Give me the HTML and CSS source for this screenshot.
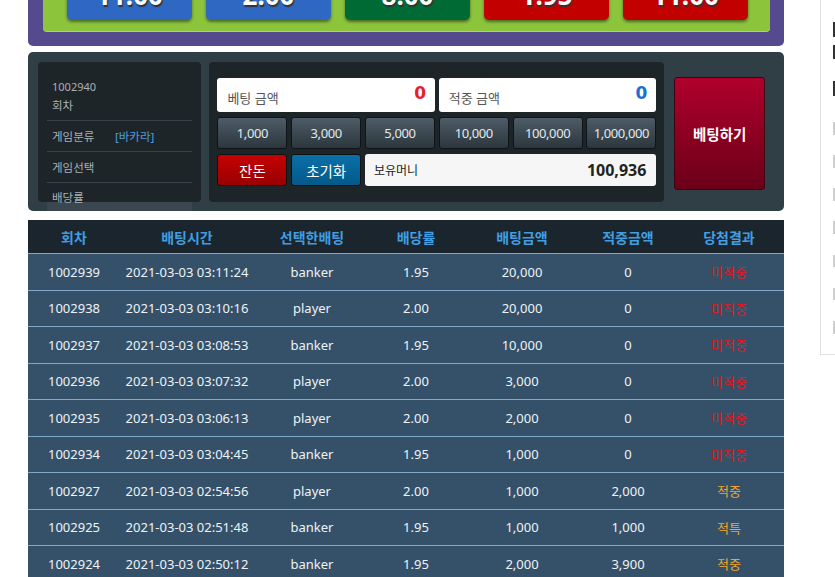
FILE: index.html
```html
<!DOCTYPE html>
<html lang="ko">
<head>
  <meta charset="UTF-8">
  <meta name="viewport" content="width=device-width, initial-scale=1.0">
  <title>바카라 베팅</title>
  <link rel="stylesheet" href="styles.css">
</head>
<body>
  <div class="page">
    <div class="game">
      <div class="odds-panel">
        <div class="odds-board">
          <button class="odd blue">11.00</button>
          <button class="odd blue">2.00</button>
          <button class="odd green">8.00</button>
          <button class="odd red">1.95</button>
          <button class="odd red">11.00</button>
        </div>
      </div>

      <div class="bet-panel">
        <div class="info-box">
          <ul class="info-list">
            <li><span class="round-no">1002940</span><span>회차</span></li>
            <li><span class="info-label">게임분류</span><span class="info-value">[바카라]</span></li>
            <li><span class="info-label">게임선택</span></li>
            <li class="last"><span class="info-label">배당률</span></li>
          </ul>
        </div>

        <div class="bet-box">
          <div class="amount-field span3">
            <span>베팅 금액</span><b class="red-val">0</b>
          </div>
          <div class="amount-field span3">
            <span>적중 금액</span><b class="blue-val">0</b>
          </div>
          <button class="chip">1,000</button>
          <button class="chip">3,000</button>
          <button class="chip">5,000</button>
          <button class="chip">10,000</button>
          <button class="chip">100,000</button>
          <button class="chip">1,000,000</button>
          <button class="action change">잔돈</button>
          <button class="action reset">초기화</button>
          <div class="money-field span4">
            <span>보유머니</span><b>100,936</b>
          </div>
        </div>

        <button class="bet-btn">베팅하기</button>
      </div>

      <table class="history">
        <thead>
          <tr>
            <th class="c1">회차</th>
            <th class="c2">배팅시간</th>
            <th class="c3">선택한배팅</th>
            <th class="c4">배당률</th>
            <th class="c5">배팅금액</th>
            <th class="c6">적중금액</th>
            <th class="c7">당첨결과</th>
          </tr>
        </thead>
        <tbody>
          <tr><td>1002939</td><td>2021-03-03 03:11:24</td><td>banker</td><td>1.95</td><td>20,000</td><td>0</td><td class="lose">미적중</td></tr>
          <tr><td>1002938</td><td>2021-03-03 03:10:16</td><td>player</td><td>2.00</td><td>20,000</td><td>0</td><td class="lose">미적중</td></tr>
          <tr><td>1002937</td><td>2021-03-03 03:08:53</td><td>banker</td><td>1.95</td><td>10,000</td><td>0</td><td class="lose">미적중</td></tr>
          <tr><td>1002936</td><td>2021-03-03 03:07:32</td><td>player</td><td>2.00</td><td>3,000</td><td>0</td><td class="lose">미적중</td></tr>
          <tr><td>1002935</td><td>2021-03-03 03:06:13</td><td>player</td><td>2.00</td><td>2,000</td><td>0</td><td class="lose">미적중</td></tr>
          <tr><td>1002934</td><td>2021-03-03 03:04:45</td><td>banker</td><td>1.95</td><td>1,000</td><td>0</td><td class="lose">미적중</td></tr>
          <tr><td>1002927</td><td>2021-03-03 02:54:56</td><td>player</td><td>2.00</td><td>1,000</td><td>2,000</td><td class="win">적중</td></tr>
          <tr><td>1002925</td><td>2021-03-03 02:51:48</td><td>banker</td><td>1.95</td><td>1,000</td><td>1,000</td><td class="win">적특</td></tr>
          <tr><td>1002924</td><td>2021-03-03 02:50:12</td><td>banker</td><td>1.95</td><td>2,000</td><td>3,900</td><td class="win">적중</td></tr>
        </tbody>
      </table>
    </div>

    <div class="side">
      <span class="mark dark m1"></span>
      <span class="mark dark m2"></span>
      <span class="mark dark m3"></span>
      <span class="mark light"></span>
      <span class="mark light"></span>
      <span class="mark light"></span>
      <span class="mark light"></span>
      <span class="mark light"></span>
      <span class="mark light"></span>
      <span class="mark light"></span>
    </div>
  </div>
</body>
</html>
```

FILE: styles.css
```css
html, body {
  margin: 0;
  padding: 0;
  background: #fff;
  overflow: hidden;
}
body {
  font-family: "Noto Sans", "Noto Sans CJK KR", sans-serif;
  font-size: 13px;
  color: #333;
}
button {
  font-family: inherit;
  cursor: pointer;
  padding: 0;
}
.page {
  display: flex;
  align-items: flex-start;
  width: 1100px;
}
.game {
  width: 756px;
  margin-left: 28px;
}

/* odds board */
.odds-panel {
  margin-top: -30px;
  background: #564a8f;
  border-radius: 0 0 5px 5px;
  padding: 0 14px 15px 15px;
}
.odds-board {
  background: #8cc43c;
  border-radius: 0 0 4px 4px;
  padding: 0 20px 11px 24px;
  display: flex;
  gap: 14px;
  box-shadow: 0 1px 0 #a8dc58;
}
.odd {
  width: 125px;
  height: 50px;
  border: none;
  border-radius: 0 0 5px 5px;
  color: #fff;
  font-size: 26px;
  font-weight: bold;
  line-height: 50px;
  text-shadow: 1px 2px 1px #333;
  box-shadow: 0 2px 3px rgba(0, 0, 0, 0.45);
}
.odd.blue { background: #2f68c2; }
.odd.green { background: #006a35; }
.odd.red { background: #c30000; }

/* bet panel */
.bet-panel {
  margin-top: 6px;
  height: 159px;
  background: #303e46;
  border-radius: 5px;
  padding: 10px 19px 0 10px;
  box-sizing: border-box;
  display: flex;
  align-items: flex-start;
}
.info-box {
  width: 164px;
  height: 140px;
  background: #1e2529;
  border-radius: 4px;
  padding: 10px 9px 0 9px;
  box-sizing: border-box;
}
.info-list {
  list-style: none;
  margin: 0;
  padding: 0;
  color: #a9b1b6;
  font-size: 11.5px;
}
.info-list li {
  height: 30px;
  display: flex;
  align-items: center;
  padding-left: 5px;
  border-bottom: 1px solid #36434b;
}
.info-list li:first-child {
  height: 48px;
  flex-direction: column;
  align-items: flex-start;
  justify-content: center;
  gap: 3px;
}
.info-list li.last {
  height: 28px;
  align-items: flex-start;
  padding-top: 6px;
  box-sizing: border-box;
  border-bottom: none;
  background: linear-gradient(#1e2529 0, #1e2529 19px, #3a4750 19px);
}
.round-no {
  font-size: 11px;
}
.info-label {
  width: 63px;
}
.info-value {
  color: #4d9fe0;
}

.bet-box {
  width: 455px;
  height: 140px;
  margin-left: 8px;
  background: #1e2529;
  border-radius: 4px;
  padding: 16px 8px 0 8px;
  box-sizing: border-box;
  display: grid;
  grid-template-columns: repeat(6, 70px);
  grid-template-rows: 34px 32px 32px;
  column-gap: 3.8px;
  row-gap: 5px;
}
.span3 { grid-column: span 3; }
.span4 { grid-column: span 4; }
.amount-field, .money-field {
  background: #fff;
  border-radius: 3px;
  display: flex;
  align-items: center;
  justify-content: space-between;
  padding: 0 9px 0 10px;
  color: #555;
  font-size: 13px;
}
.amount-field span { padding-top: 4px; }
.amount-field b {
  font-family: "DejaVu Sans", sans-serif;
  font-size: 17px;
  margin-top: -5px;
}
.red-val { color: #e8202a; }
.blue-val { color: #1a6fd6; }
.chip {
  border: 1px solid #101418;
  border-radius: 3px;
  background: linear-gradient(#4d5c67, #2c363d);
  color: #e3e8ec;
  font-size: 13px;
  letter-spacing: -0.4px;
}
.action {
  border: 1px solid #111;
  border-radius: 3px;
  color: #fff;
  font-size: 14.5px;
}
.action.change { background: linear-gradient(#c40202, #980000); }
.action.reset { background: linear-gradient(#0a70a8, #04598a); }
.money-field {
  background: #f6f6f6;
  color: #222;
  font-size: 12px;
  padding: 0 10px 0 9px;
}
.money-field b {
  font-size: 16px;
  color: #222;
}

.bet-btn {
  width: 91px;
  height: 113px;
  margin: 15px 0 0 10px;
  border: 1px solid #3a0510;
  border-radius: 3px;
  background: linear-gradient(#b0002c, #6b0018);
  color: #fff;
  font-size: 14.5px;
  font-weight: bold;
}

/* history table */
.history {
  width: 756px;
  margin-top: 9px;
  border-collapse: collapse;
  table-layout: fixed;
  text-align: center;
}
.history th {
  height: 33px;
  padding: 0;
  background: #1b252d;
  color: #3f9fe2;
  font-size: 14px;
  font-weight: bold;
}
.history td {
  height: 35.5px;
  padding: 0;
  background: #35516a;
  border-top: 1px solid #7fa9c9;
  color: #eef3f6;
  font-size: 13px;
}
.c1 { width: 92px; }
.c2 { width: 134px; }
.c3 { width: 116px; }
.c4 { width: 92px; }
.c5 { width: 120px; }
.c6 { width: 92px; }
.c7 { width: 110px; }
.history td.lose { color: #e8141e; }
.history td.win { color: #f3a62a; }

/* side panel */
.side {
  width: 200px;
  height: 355px;
  margin-left: 36px;
  border: 1px solid #e2e2e2;
  border-top: none;
  padding: 22px 0 0 12px;
  box-sizing: border-box;
  display: flex;
  flex-direction: column;
}
.mark {
  display: block;
  width: 10px;
}
.mark.dark {
  height: 15px;
  background: #333;
  margin-bottom: 8px;
}
.mark.m3 { margin-top: 14px; margin-bottom: 26px; }
.mark.light {
  height: 13px;
  background: #cfcfcf;
  margin-bottom: 20.5px;
}
```
